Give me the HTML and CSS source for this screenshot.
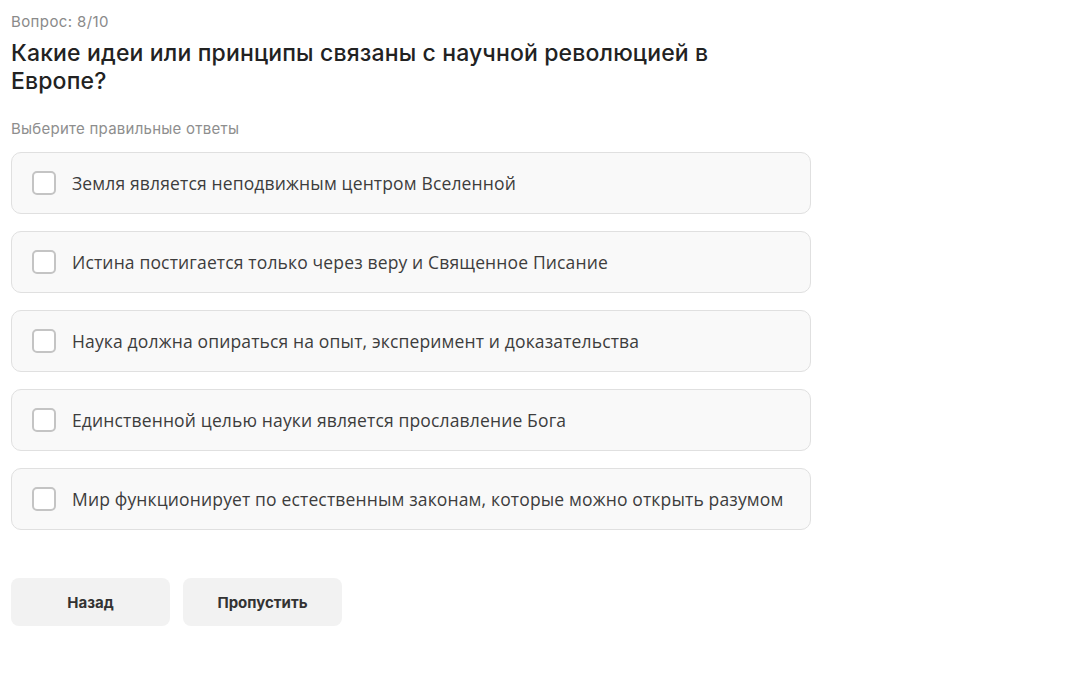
FILE: index.html
```html
<!DOCTYPE html>
<html lang="ru">
<head>
<meta charset="utf-8">
<title>Вопрос 8/10</title>
<link rel="stylesheet" href="styles.css">
</head>
<body>
<main class="quiz">
  <div class="counter">Вопрос: 8/10</div>
  <h1 class="question">Какие идеи или принципы связаны с научной революцией в Европе?</h1>
  <div class="hint">Выберите правильные ответы</div>
  <ul class="options">
    <li class="option"><span class="box"></span><span class="label">Земля является неподвижным центром Вселенной</span></li>
    <li class="option"><span class="box"></span><span class="label">Истина постигается только через веру и Священное Писание</span></li>
    <li class="option"><span class="box"></span><span class="label">Наука должна опираться на опыт, эксперимент и доказательства</span></li>
    <li class="option"><span class="box"></span><span class="label">Единственной целью науки является прославление Бога</span></li>
    <li class="option"><span class="box"></span><span class="label">Мир функционирует по естественным законам, которые можно открыть разумом</span></li>
  </ul>
  <div class="actions">
    <button class="btn">Назад</button>
    <button class="btn">Пропустить</button>
  </div>
</main>
</body>
</html>
```
FILE: styles.css
```css
* { box-sizing: border-box; }
body {
  margin: 0;
  background: #fff;
  font-family: "Inter", "Noto Sans", sans-serif;
  color: #222;
}
.quiz {
  width: 800px;
  padding: 12px 0 0 11px;
  box-sizing: content-box;
}
.counter {
  font-size: 15px;
  line-height: 20px;
  letter-spacing: 0.4px;
  color: #8a8a8a;
}
.question {
  margin: 7px 0 0;
  max-width: 730px;
  font-size: 23px;
  line-height: 28px;
  letter-spacing: 0.15px;
  font-weight: 500;
  color: #222;
}
.hint {
  margin-top: 24px;
  font-size: 15px;
  line-height: 20px;
  letter-spacing: 0.25px;
  color: #8e8e8e;
}
.options {
  list-style: none;
  margin: 13px 0 0;
  padding: 0;
  display: flex;
  flex-direction: column;
  gap: 17px;
  width: 800px;
}
.option {
  height: 62px;
  display: flex;
  align-items: center;
  gap: 16px;
  padding: 0 20px;
  background: #f9f9f9;
  border: 1px solid #e0e0e0;
  border-radius: 10px;
}
.box {
  width: 24px;
  height: 24px;
  flex: none;
  border: 2px solid #c4c4c4;
  border-radius: 5px;
  background: #fff;
}
.label {
  font-family: "Open Sans", "Noto Sans", sans-serif;
  font-size: 17.5px;
  letter-spacing: 0.15px;
  color: #3d3d3d;
}
.actions {
  display: flex;
  gap: 13px;
  margin-top: 48px;
}
.btn {
  width: 159px;
  height: 48px;
  border: none;
  border-radius: 8px;
  background: #f2f2f2;
  font-family: "Inter", sans-serif;
  font-size: 15px;
  font-weight: 700;
  color: #333;
}
```
